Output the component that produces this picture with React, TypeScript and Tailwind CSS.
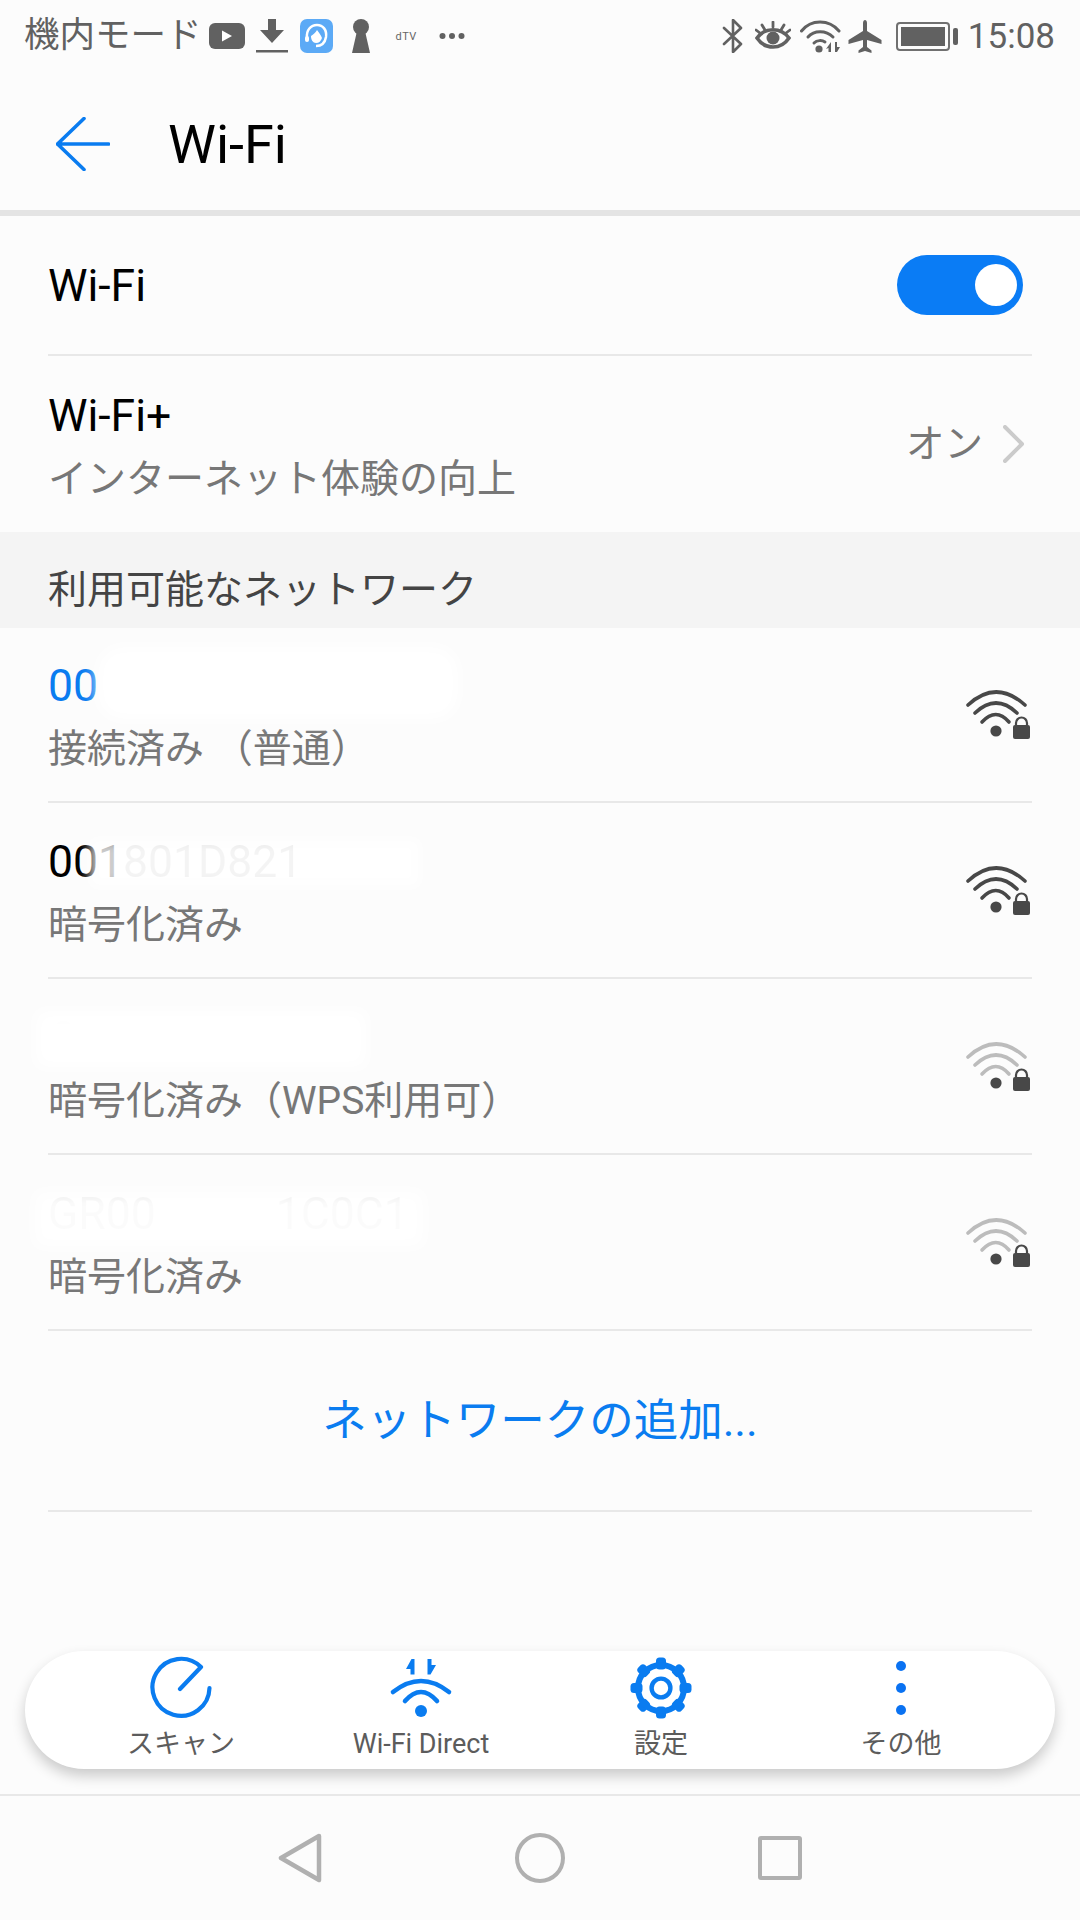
import { ReactNode } from "react";

const BLUE = "#0a7cf0";

/* STATUS BAR ICONS */

function StatusLeftIcons() {
  return (
    <>
      {/* video */}
      <svg width="36" height="26" viewBox="0 0 36 26" className="ml-[7px]">
        <rect x="0" y="0" width="36" height="26" rx="6" fill="#616161" />
        <path d="M13 7.5 L23 13 L13 18.5 Z" fill="#fff" />
      </svg>
      {/* download */}
      <svg width="32" height="34" viewBox="0 0 32 34" className="ml-[11px]">
        <path d="M12 0 H20 V11 H28 L16 24 L4 11 H12 Z" fill="#616161" />
        <rect x="0" y="31" width="32" height="2.5" fill="#616161" />
      </svg>
      {/* assistant app */}
      <svg width="33" height="34" viewBox="0 0 33 34" className="ml-[12px]">
        <rect width="33" height="34" rx="7" fill="#5caaf6" />
        <path
          d="M7 19 C6 11 11 6 17 6 C23 6 27 11 26 18 C25 24 21 27 16 27"
          fill="none"
          stroke="#fff"
          strokeWidth="2.5"
        />
        <path d="M11 17 C14 15 16 13 17 11 C19 14 21 16 22 19 C21 22 19 24 16 24 C13 24 11 21 11 17 Z" fill="#fff" />
        <rect x="5" y="17" width="4" height="6" rx="2" fill="#fff" />
      </svg>
      {/* keyhole */}
      <svg width="20" height="34" viewBox="0 0 20 34" className="ml-[18px]">
        <circle cx="10" cy="8" r="8" fill="#616161" />
        <path d="M6 12 H14 L19 34 H1 Z" fill="#616161" />
      </svg>
      <span className="ml-[25px] w-[21px] text-[11px] leading-none text-[#666] tracking-[0.5px]">dTV</span>
      <svg width="26" height="8" viewBox="0 0 26 8" className="ml-[22px]">
        <circle cx="3.5" cy="4" r="3" fill="#616161" />
        <circle cx="13" cy="4" r="3" fill="#616161" />
        <circle cx="22.5" cy="4" r="3" fill="#616161" />
      </svg>
    </>
  );
}

function StatusRightIcons() {
  return (
    <>
      <svg width="22" height="34" viewBox="0 0 22 34">
        <path
          d="M2 9 L19 25 L11 33 V1 L19 9 L2 25"
          fill="none"
          stroke="#616161"
          strokeWidth="2.6"
          strokeLinecap="round"
          strokeLinejoin="round"
        />
      </svg>
      {/* eye comfort */}
      <svg width="36" height="30" viewBox="0 0 36 30" className="ml-[11px]">
        <path d="M2 17 C10 6 26 6 34 17 C26 29 10 29 2 17 Z" fill="none" stroke="#616161" strokeWidth="3.6" />
        <circle cx="18" cy="17" r="6.5" fill="#616161" />
        <path d="M18 1 V6 M7 4 L10 9 M29 4 L26 9 M1 9 L5 12 M35 9 L31 12" stroke="#616161" strokeWidth="2.8" strokeLinecap="round" />
      </svg>
      {/* wifi with traffic arrows */}
      <svg width="41" height="33" viewBox="0 0 41 33" className="ml-[9px]">
        <path d="M1.5 11 C11 -1 29 -1 39 11" fill="none" stroke="#616161" strokeWidth="3" strokeLinecap="round" />
        <path d="M8 17 C14 10 26 10 33 17" fill="none" stroke="#616161" strokeWidth="3" strokeLinecap="round" />
        <path d="M14 23 C17 20 22 20 25 22" fill="none" stroke="#616161" strokeWidth="3" strokeLinecap="round" />
        <circle cx="19" cy="29" r="3.6" fill="#616161" />
        <path d="M31 22 V32 H28.5 V28 L26 29 Z M35 22 H37 V27 L40 27 L37 32 H35 Z" fill="#616161" />
      </svg>
      {/* airplane mode */}
      <svg width="34" height="33" viewBox="0 0 34 33" className="ml-[7px]">
        <path
          d="M15 3 C15 1 16 0 17 0 C18 0 19 1 19 3 V11 L33.5 20 V24 L19 20 V27 L23.5 30.5 V33 L17 31 L10.5 33 V30.5 L15 27 V20 L0.5 24 V20 L15 11 Z"
          fill="#616161"
        />
      </svg>
      {/* battery */}
      <div className="ml-[14px] flex items-center">
        <div className="h-[29px] w-[54px] rounded-[4px] border-2 border-[#707070] p-[3px]">
          <div className="h-full w-[44px] bg-[#616161]" />
        </div>
        <div className="ml-[3px] h-[17px] w-[5px] rounded-[2px] bg-[#616161]" />
      </div>
      <span className="ml-[10px] text-[35px] leading-none text-[#616161]">15:08</span>
    </>
  );
}

/* WIFI SIGNAL WITH LOCK */

function SecuredWifi({ weak }: { weak?: boolean }) {
  const arc = weak ? "#bcbcbc" : "#484848";
  return (
    <svg width="64" height="50" viewBox="0 0 64 50" className="mt-[2px]">
      <path d="M2 15 Q30 -11 59 15" fill="none" stroke={arc} strokeWidth="3.6" strokeLinecap="round" />
      <path d="M9 23 Q30 3 51 23" fill="none" stroke={arc} strokeWidth="3.6" strokeLinecap="round" />
      <path d="M16 32 Q30 17 43 32" fill="none" stroke={arc} strokeWidth="3.6" strokeLinecap="round" />
      <circle cx="30" cy="41" r="5.6" fill="#484848" />
      <path d="M50 37 V33 A5.5 5.5 0 0 1 61 33 V37" fill="none" stroke="#484848" strokeWidth="2.2" />
      <rect x="47" y="35" width="17" height="14" rx="2" fill="#484848" />
    </svg>
  );
}

/* BOTTOM TOOLBAR ICONS */

function ScanIcon() {
  return (
    <svg width="64" height="64" viewBox="0 0 64 64">
      <path
        d="M60.5 32 A28.5 28.5 0 1 1 52 11 L31 33"
        fill="none"
        stroke={BLUE}
        strokeWidth="4.2"
        strokeLinecap="round"
        strokeLinejoin="round"
      />
    </svg>
  );
}

function DirectIcon() {
  return (
    <svg width="64" height="64" viewBox="0 0 64 64">
      <path d="M4 36 Q32 14 60 36" fill="none" stroke={BLUE} strokeWidth="4.6" strokeLinecap="round" />
      <path d="M16 45 Q32 27 48 45" fill="none" stroke={BLUE} strokeWidth="4.6" strokeLinecap="round" />
      <circle cx="32" cy="55" r="6" fill={BLUE} />
      <path d="M25.5 3 H22.5 L17 13 H21.5 V18.5 H25.5 Z" fill={BLUE} />
      <path d="M38.5 3 H42.5 V9 H47 L41.5 18.5 H38.5 Z" fill={BLUE} />
    </svg>
  );
}

function GearIcon() {
  const teeth = [0, 45, 90, 135, 180, 225, 270, 315];
  return (
    <svg width="64" height="64" viewBox="0 0 64 64">
      {teeth.map((deg) => (
        <rect key={deg} x="27" y="1.5" width="10" height="12" rx="3.5" fill={BLUE} transform={`rotate(${deg} 32 32)`} />
      ))}
      <circle cx="32" cy="32" r="23" fill="none" stroke={BLUE} strokeWidth="6" />
      <circle cx="32" cy="32" r="9.4" fill="none" stroke={BLUE} strokeWidth="4.4" />
    </svg>
  );
}

function MoreIcon() {
  return (
    <svg width="64" height="64" viewBox="0 0 64 64">
      <circle cx="32" cy="10" r="5" fill="#0a72f2" />
      <circle cx="32" cy="32" r="5" fill="#0a72f2" />
      <circle cx="32" cy="54" r="5" fill="#0a72f2" />
    </svg>
  );
}

/* LIST ROW */

function NetworkRow({
  title,
  sub,
  icon,
  last,
}: {
  title: ReactNode;
  sub: string;
  icon?: ReactNode;
  last?: boolean;
}) {
  return (
    <div className={`flex h-[176px] items-center justify-between pr-[2px] ${last ? "" : "border-b-2 border-[#e8e8e8]"}`}>
      <div className="pt-[7px]">
        <div className="relative text-[44.5px] leading-[63px] text-black">{title}</div>
        <div className="text-[39px] leading-[63px] text-[#777]">{sub}</div>
      </div>
      {icon}
    </div>
  );
}

function ToolButton({ icon, label }: { icon: ReactNode; label: string }) {
  return (
    <div className="flex flex-col items-center">
      {icon}
      <span className="mt-[7px] text-[27px] leading-[34px] text-[#5c5c5c]">{label}</span>
    </div>
  );
}

export default function App() {
  return (
    <div className="flex h-[1920px] w-[1080px] flex-col overflow-hidden bg-[#fcfcfc] font-[Roboto,'Noto_Sans_CJK_JP',sans-serif]">
      {/* STATUS BAR */}
      <div className="flex h-[72px] items-center pl-[24px] pr-[25px]">
        <span className="text-[35.5px] leading-none text-[#616161]">機内モード</span>
        <StatusLeftIcons />
        <div className="ml-auto flex items-center">
          <StatusRightIcons />
        </div>
      </div>

      {/* HEADER */}
      <div className="flex h-[144px] shrink-0 items-center border-b-[6px] border-[#e4e4e4] pl-[56px] pt-[6px]">
        <svg width="54" height="54" viewBox="0 0 54 54">
          <path
            d="M28 1.5 L1.5 27 L28 52.5 M1.5 27 H52.5"
            fill="none"
            stroke={BLUE}
            strokeWidth="3.6"
            strokeLinecap="round"
            strokeLinejoin="round"
          />
        </svg>
        <h1 className="ml-[58px] pt-[1px] text-[54px] font-normal leading-none text-black">Wi-Fi</h1>
      </div>

      {/* WI-FI SETTINGS */}
      <div className="px-[48px]">
        <div className="flex h-[140px] items-center justify-between border-b-2 border-[#e8e8e8] pr-[9px]">
          <span className="pt-[2px] text-[44.5px] leading-none text-black">Wi-Fi</span>
          <div className="flex h-[60px] w-[126px] items-center justify-end rounded-full bg-[#0a7cf5] pr-[6px]">
            <div className="h-[42px] w-[42px] rounded-full bg-white" />
          </div>
        </div>
        <NetworkRow
          title="Wi-Fi+"
          sub="インターネット体験の向上"
          last
          icon={
            <div className="flex items-center pr-[5px]">
              <span className="text-[38.5px] leading-none text-[#777]">オン</span>
              <svg width="22" height="38" viewBox="0 0 22 38" className="ml-[20px]">
                <path d="M2 2 L19 19 L2 36" fill="none" stroke="#cbcbcb" strokeWidth="4" strokeLinecap="round" strokeLinejoin="round" />
              </svg>
            </div>
          }
        />
      </div>

      <div className="flex h-[96px] shrink-0 items-center bg-[#f4f4f4] pl-[48px] pt-[20px] text-[39px] leading-none text-[#444]">
        利用可能なネットワーク
      </div>

      {/* NETWORK LIST: the names are masked by soft white patches */}
      <div className="-mt-px px-[48px]">
        <NetworkRow
          title={
            <>
              <span className="text-[#0a7cf0]">00</span>
              <span className="absolute left-[50px] top-[-8px] h-[72px] w-[360px] rounded-[24px] bg-white blur-[8px]" />
            </>
          }
          sub="接続済み （普通）"
          icon={<SecuredWifi />}
        />
        <NetworkRow
          title={
            <>
              <span>001</span>
              <span className="opacity-20">801D821</span>
              <span className="absolute left-[42px] top-[8px] h-[48px] w-[330px] bg-white/80 blur-[6px]" />
            </>
          }
          sub="暗号化済み"
          icon={<SecuredWifi />}
        />
        <NetworkRow
          title={
            <>
              <span className="opacity-[0.06]">C</span>
              <span className="absolute left-[-12px] top-[4px] h-[56px] w-[330px] bg-white blur-[8px]" />
            </>
          }
          sub="暗号化済み（WPS利用可）"
          icon={<SecuredWifi weak />}
        />
        <NetworkRow
          title={
            <>
              <span className="opacity-[0.14]">GR00</span>
              <span className="ml-[120px] opacity-[0.14]">1C0C1</span>
              <span className="absolute left-[-14px] top-[8px] h-[56px] w-[390px] bg-white/90 blur-[8px]" />
            </>
          }
          sub="暗号化済み"
          icon={<SecuredWifi weak />}
        />
        <div className="flex h-[181px] items-center justify-center border-b-2 border-[#e8e8e8] pt-[2px] text-[44.5px] leading-none text-[#0a7cf0]">
          ネットワークの追加...
        </div>
      </div>

      {/* BOTTOM TOOLBAR */}
      <div className="mx-[25px] mt-[139px] grid h-[118px] shrink-0 grid-cols-4 rounded-full bg-white pl-[36px] pr-[34px] pt-[5px] shadow-[0_7px_14px_rgba(0,0,0,0.2)]">
        <ToolButton icon={<ScanIcon />} label="スキャン" />
        <ToolButton icon={<DirectIcon />} label="Wi-Fi Direct" />
        <ToolButton icon={<GearIcon />} label="設定" />
        <ToolButton icon={<MoreIcon />} label="その他" />
      </div>

      {/* NAVIGATION BAR */}
      <div className="mt-[25px] flex flex-1 justify-center border-t-2 border-[#e8e8e8]">
        <div className="grid w-[720px] grid-cols-3 items-center justify-items-center">
          <svg width="44" height="50" viewBox="0 0 44 50">
            <path d="M41 3 L3 25 L41 47 Z" fill="none" stroke="#b0b0b0" strokeWidth="4.5" strokeLinejoin="round" />
          </svg>
          <div className="h-[50px] w-[50px] rounded-full border-[4.5px] border-[#b0b0b0]" />
          <div className="h-[44px] w-[44px] rounded-[3px] border-[4.5px] border-[#b0b0b0]" />
        </div>
      </div>
    </div>
  );
}
